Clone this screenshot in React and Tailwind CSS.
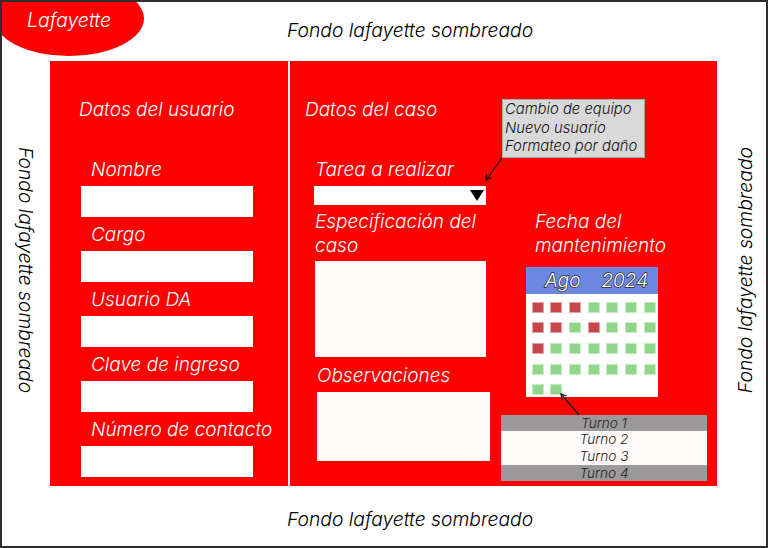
import React from 'react';

const usuarioFields = ['Nombre', 'Cargo', 'Usuario DA', 'Clave de ingreso', 'Número de contacto'];

// R = ocupado, G = libre
const dias = [
  'RRRGGGG',
  'RRGRGGG',
  'RGGGGGG',
  'GGGGGGG',
  'GG',
];

function Field({ label }) {
  return (
    <div className="mb-[7px]">
      <div className="pl-[10px] text-[19px] leading-[22px] text-white">{label}</div>
      <div className="mt-[5px] h-[31px] w-[172px] bg-white" />
    </div>
  );
}

function Calendario() {
  return (
    <div className="ml-[25px] mt-[9px] h-[130px] w-[132px] bg-white">
      <div className="flex h-[27px] items-center bg-[#6b87df] pl-[19px] text-[19px] leading-none text-white [-webkit-text-stroke:1.4px_#2a2a2a] [paint-order:stroke_fill]">
        <span>Ago</span>
        <span className="ml-[21px]">2024</span>
      </div>
      <div className="grid grid-cols-[repeat(7,12px)] gap-x-[6.7px] gap-y-[9.7px] pl-[5.5px] pt-[7.5px]">
        {dias.flatMap((fila, i) =>
          fila.split('').map((d, j) => (
            <div
              key={i + '-' + j}
              className={
                d === 'R'
                  ? 'h-[11px] w-[12px] border border-[#e3a3a5] bg-[#c8454a]'
                  : 'h-[11px] w-[12px] border border-[#c4ecc0] bg-[#8fd58a]'
              }
            />
          ))
        )}
      </div>
    </div>
  );
}

function Turnos() {
  return (
    <div className="mt-[18px] w-[206px] text-center text-[13.6px] leading-[17px] text-[#222]">
      <div className="h-[16px] bg-[#9b9999] leading-[16px]">Turno 1</div>
      <div className="bg-[#fdf9f8]">
        <div>Turno 2</div>
        <div>Turno 3</div>
      </div>
      <div className="h-[16px] bg-[#9b9999] leading-[16px]">Turno 4</div>
    </div>
  );
}

export default function App() {
  return (
    <div className="relative h-[548px] w-[768px] overflow-hidden border-2 border-[#2e2e2e] bg-white font-[Inter,sans-serif] font-light italic">
      {/* logo */}
      <div className="absolute -left-[8px] -top-[21px] flex h-[75px] w-[150px] items-center justify-center rounded-[50%] bg-[#ff0000] pt-[2px]">
        <span className="text-[19.5px] leading-[22px] text-white">Lafayette</span>
      </div>

      {/* cabecera */}
      <div className="h-[59px] pl-[285px] pt-[17px] text-[19.3px] leading-[22px] text-black">
        Fondo lafayette sombreado
      </div>

      <div className="flex h-[425px]">
        <div className="flex w-[48px] items-center justify-center pb-[6px]">
          <span className="text-[19.3px] leading-[22px] text-black [writing-mode:vertical-rl]">
            Fondo lafayette sombreado
          </span>
        </div>

        {/* panel rojo */}
        <div className="flex w-[667px] bg-[#ff0000]">
          {/* datos del usuario */}
          <div className="w-[238px] pl-[31px]">
            <div className="-ml-[2px] mt-[38px] text-[19px] leading-[22px] text-white">Datos del usuario</div>
            <div className="mt-[38px]">
              {usuarioFields.map((f) => (
                <Field key={f} label={f} />
              ))}
            </div>
          </div>

          <div className="w-[2px] bg-[#fff0f0]" />

          {/* datos del caso */}
          <div className="relative flex-1">
            <div className="pl-[15px] pt-[38px] text-[19px] leading-[22px] text-white">Datos del caso</div>

            <div className="flex">
              <div className="w-[176px] pl-[24px] box-content">
                <div className="mt-[38px] pl-[1px] text-[19px] leading-[22px] text-white">Tarea a realizar</div>
                <div className="mt-[5px] flex h-[19px] w-[172px] items-center justify-end bg-white pr-[2px]">
                  <svg width="14" height="11" viewBox="0 0 14 11">
                    <path d="M0 0 H14 L7 11 Z" fill="#000" />
                  </svg>
                </div>
                <div className="mt-[5px] pl-[1px] text-[19px] leading-[24px] text-white">
                  Especificación del
                  <br />
                  caso
                </div>
                <div className="ml-[1px] mt-[3px] h-[96px] w-[171px] bg-[#fdfbfa]" />
                <div className="ml-[3px] mt-[8px] text-[19px] leading-[22px] text-white">Observaciones</div>
                <div className="ml-[3px] mt-[5px] h-[69px] w-[173px] bg-[#fdfbfa]" />
              </div>

              <div className="ml-[11px] w-[206px]">
                <div className="mt-[89px] pl-[34px] text-[19px] leading-[24px] text-white">
                  Fecha del
                  <br />
                  mantenimiento
                </div>
                <Calendario />
                <Turnos />
              </div>
            </div>

            {/* opciones de tarea */}
            <div className="absolute left-[212px] top-[38px] h-[59px] w-[143px] border border-[#a8a8a8] bg-[#d9d9d9] pl-[2px] text-[14.8px] leading-[18.5px] text-[#111]">
              <div>Cambio de equipo</div>
              <div>Nuevo usuario</div>
              <div>Formateo por daño</div>
            </div>
          </div>
        </div>

        <div className="flex flex-1 items-center justify-center pb-[6px] pl-[6px]">
          <span className="rotate-180 text-[19.3px] leading-[22px] text-black [writing-mode:vertical-rl]">
            Fondo lafayette sombreado
          </span>
        </div>
      </div>

      <div className="pl-[285px] pt-[22px] text-[19.3px] leading-[22px] text-black">Fondo lafayette sombreado</div>

      {/* flechas */}
      <svg className="pointer-events-none absolute -left-[2px] -top-[2px]" width="768" height="548" viewBox="0 0 768 548">
        <g stroke="#111" strokeWidth="1.2" fill="none">
          <path d="M502 158 L486 180" />
          <path d="M491.5 177.6 L486 180 L486.6 174" />
          <path d="M579 415 L561 394" />
          <path d="M562.1 399.9 L561 394 L566.7 396" />
        </g>
      </svg>
    </div>
  );
}
